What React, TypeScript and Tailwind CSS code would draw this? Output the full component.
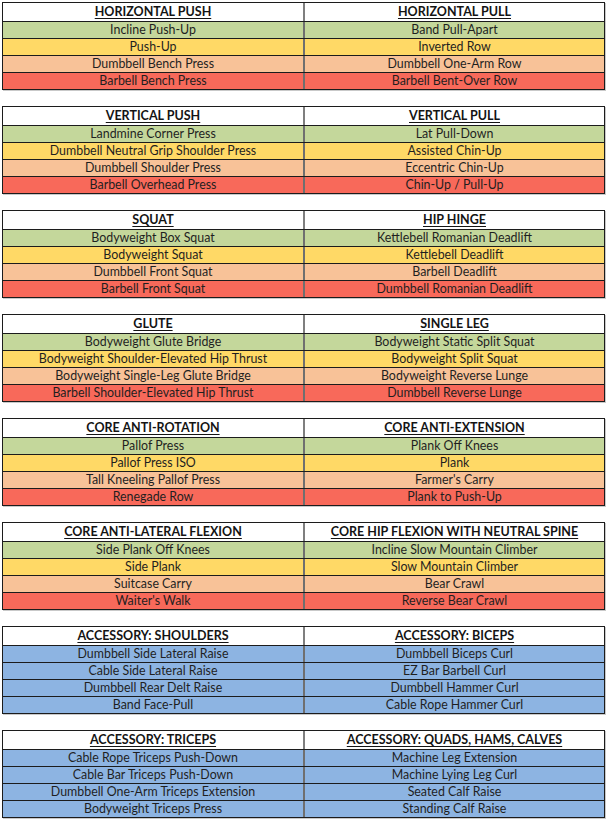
import React from 'react';

type Tier = 'green' | 'yellow' | 'peach' | 'red' | 'blue';

interface Block {
  left: string;
  right: string;
  rows: [string, string][];
  tiers: Tier[];
}

const progression: Tier[] = ['green', 'yellow', 'peach', 'red'];
const accessory: Tier[] = ['blue', 'blue', 'blue', 'blue'];

const tierBg: Record<Tier, string> = {
  green: 'bg-[#c4d79b]',
  yellow: 'bg-[#ffd966]',
  peach: 'bg-[#f8c298]',
  red: 'bg-[#f8695a]',
  blue: 'bg-[#8db4e2]',
};

const blocks: Block[] = [
  {
    left: 'HORIZONTAL PUSH',
    right: 'HORIZONTAL PULL',
    rows: [
      ['Incline Push-Up', 'Band Pull-Apart'],
      ['Push-Up', 'Inverted Row'],
      ['Dumbbell Bench Press', 'Dumbbell One-Arm Row'],
      ['Barbell Bench Press', 'Barbell Bent-Over Row'],
    ],
    tiers: progression,
  },
  {
    left: 'VERTICAL PUSH',
    right: 'VERTICAL PULL',
    rows: [
      ['Landmine Corner Press', 'Lat Pull-Down'],
      ['Dumbbell Neutral Grip Shoulder Press', 'Assisted Chin-Up'],
      ['Dumbbell Shoulder Press', 'Eccentric Chin-Up'],
      ['Barbell Overhead Press', 'Chin-Up / Pull-Up'],
    ],
    tiers: progression,
  },
  {
    left: 'SQUAT',
    right: 'HIP HINGE',
    rows: [
      ['Bodyweight Box Squat', 'Kettlebell Romanian Deadlift'],
      ['Bodyweight Squat', 'Kettlebell Deadlift'],
      ['Dumbbell Front Squat', 'Barbell Deadlift'],
      ['Barbell Front Squat', 'Dumbbell Romanian Deadlift'],
    ],
    tiers: progression,
  },
  {
    left: 'GLUTE',
    right: 'SINGLE LEG',
    rows: [
      ['Bodyweight Glute Bridge', 'Bodyweight Static Split Squat'],
      ['Bodyweight Shoulder-Elevated Hip Thrust', 'Bodyweight Split Squat'],
      ['Bodyweight Single-Leg Glute Bridge', 'Bodyweight Reverse Lunge'],
      ['Barbell Shoulder-Elevated Hip Thrust', 'Dumbbell Reverse Lunge'],
    ],
    tiers: progression,
  },
  {
    left: 'CORE ANTI-ROTATION',
    right: 'CORE ANTI-EXTENSION',
    rows: [
      ['Pallof Press', 'Plank Off Knees'],
      ['Pallof Press ISO', 'Plank'],
      ['Tall Kneeling Pallof Press', "Farmer's Carry"],
      ['Renegade Row', 'Plank to Push-Up'],
    ],
    tiers: progression,
  },
  {
    left: 'CORE ANTI-LATERAL FLEXION',
    right: 'CORE HIP FLEXION WITH NEUTRAL SPINE',
    rows: [
      ['Side Plank Off Knees', 'Incline Slow Mountain Climber'],
      ['Side Plank', 'Slow Mountain Climber'],
      ['Suitcase Carry', 'Bear Crawl'],
      ["Waiter's Walk", 'Reverse Bear Crawl'],
    ],
    tiers: progression,
  },
  {
    left: 'ACCESSORY: SHOULDERS',
    right: 'ACCESSORY: BICEPS',
    rows: [
      ['Dumbbell Side Lateral Raise', 'Dumbbell Biceps Curl'],
      ['Cable Side Lateral Raise', 'EZ Bar Barbell Curl'],
      ['Dumbbell Rear Delt Raise', 'Dumbbell Hammer Curl'],
      ['Band Face-Pull', 'Cable Rope Hammer Curl'],
    ],
    tiers: accessory,
  },
  {
    left: 'ACCESSORY: TRICEPS',
    right: 'ACCESSORY: QUADS, HAMS, CALVES',
    rows: [
      ['Cable Rope Triceps Push-Down', 'Machine Leg Extension'],
      ['Cable Bar Triceps Push-Down', 'Machine Lying Leg Curl'],
      ['Dumbbell One-Arm Triceps Extension', 'Seated Calf Raise'],
      ['Bodyweight Triceps Press', 'Standing Calf Raise'],
    ],
    tiers: accessory,
  },
];

function ExerciseTable({ block }: { block: Block }) {
  return (
    <div className="w-[603px] border-x border-t border-[#1c1c1c] shadow-[1px_1px_0_#c9c9c9]">
      {/* header row */}
      <div className="flex h-[19px] border-b border-[#1c1c1c] bg-white">
        <div className="w-[302px] border-r-2 border-[#7f7f7f] flex items-center justify-center pt-[1px]">
          <span className="text-[12.5px] font-bold underline underline-offset-[2px] decoration-1 leading-none text-[#141414]">
            {block.left}
          </span>
        </div>
        <div className="flex-1 flex items-center justify-center pt-[1px]">
          <span className="text-[12.5px] font-bold underline underline-offset-[2px] decoration-1 leading-none text-[#141414]">
            {block.right}
          </span>
        </div>
      </div>
      {block.rows.map(([a, b], i) => (
        <div key={i} className={`flex h-[17px] border-b border-[#1c1c1c] ${tierBg[block.tiers[i]]}`}>
          <div className="w-[302px] border-r-2 border-[#6f6f6f] flex items-center justify-center pt-[1px] text-[12.4px] leading-none text-[#1f1f1f]">
            {a}
          </div>
          <div className="flex-1 flex items-center justify-center pt-[1px] text-[12.4px] leading-none text-[#1f1f1f]">
            {b}
          </div>
        </div>
      ))}
    </div>
  );
}

export default function App() {
  return (
    <div className="bg-white w-[607px] h-[821px] pt-[2px] pl-[2px] flex flex-col gap-[16px] font-['Lato','Open_Sans',sans-serif] overflow-hidden">
      {blocks.map((b) => (
        <ExerciseTable key={b.left} block={b} />
      ))}
    </div>
  );
}
